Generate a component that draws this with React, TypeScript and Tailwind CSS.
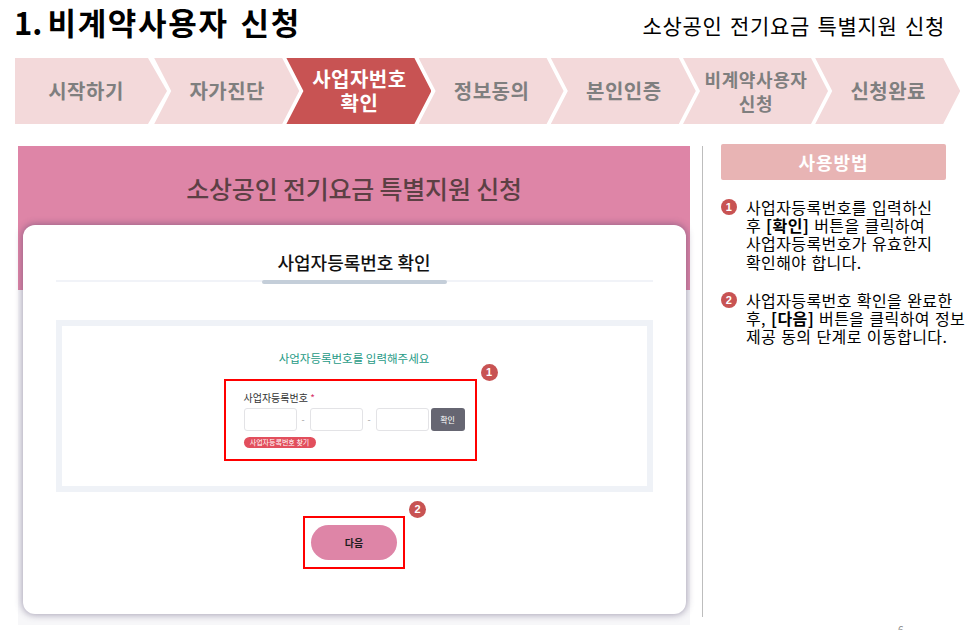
const kr = "font-['Noto_Sans_CJK_KR',sans-serif]";

const steps: { label: string[]; active?: boolean; first?: boolean }[] = [
  { label: ['시작하기'], first: true },
  { label: ['자가진단'] },
  { label: ['사업자번호', '확인'], active: true },
  { label: ['정보동의'] },
  { label: ['본인인증'] },
  { label: ['비계약사용자', '신청'] },
  { label: ['신청완료'] },
];

function Step({ label, active, first }: { label: string[]; active?: boolean; first?: boolean }) {
  const shape = first
    ? 'w-[152px] pr-[10px] [clip-path:polygon(0_0,133px_0,100%_50%,133px_100%,0_100%)]'
    : 'w-[145px] -ml-[12.8px] pl-[1px] [clip-path:polygon(0_0,128px_0,100%_50%,128px_100%,0_100%,17px_50%)]';
  const colour = active ? 'bg-[#c85353] text-white' : 'bg-[#f3d9da] text-[#7f7f7f]';
  const size = label.length > 1 && !active ? 'text-[18px] tracking-[0.6px]' : 'text-[20px] tracking-[0.5px]';
  return (
    <div className={`h-[66px] shrink-0 flex flex-col items-center justify-center font-bold leading-[24px] ${shape} ${colour} ${size}`}>
      {label.map((l) => (
        <span key={l}>{l}</span>
      ))}
    </div>
  );
}

function Badge({ n, className }: { n: number; className: string }) {
  return (
    <span className={`absolute w-[17px] h-[17px] rounded-full bg-[#c85353] text-white text-[11px] font-bold flex items-center justify-center font-['Liberation_Sans',sans-serif] ${className}`}>
      {n}
    </span>
  );
}

function Field() {
  return <div className="w-[53px] h-[23px] rounded-[3px] border border-[#e3e3e6] bg-white" />;
}

function Dash() {
  return <span className="w-[13px] text-center text-[9px] leading-[23px] text-[#9a9a9a]">-</span>;
}

export default function App() {
  return (
    <div className={`w-[979px] h-[630px] overflow-hidden bg-white relative ${kr}`}>
      <header className="h-[58px] pl-[14px] pr-[34px] flex justify-between items-start text-black">
        <h1 className="text-[31px] leading-[43px] font-bold tracking-[1.7px] [word-spacing:3px]">
          <span className="tracking-[0px] [word-spacing:-2px]">1. </span>비계약사용자 신청
        </h1>
        <p className="mt-[8px] text-[21px] leading-[34px] tracking-[0.7px] [word-spacing:2px]">소상공인 전기요금 특별지원 신청</p>
      </header>

      <nav className="ml-[15px] flex">
        {steps.map((s) => (
          <Step key={s.label[0]} {...s} />
        ))}
      </nav>

      <div className="mt-[20px] flex items-start">
        <main className="ml-[18px] mt-[2px] w-[672px] h-[479px] pt-[27px] flex flex-col items-center bg-[linear-gradient(#de85a7_144px,#f7f7f9_144px)]">
          <h2 className="text-[25px] leading-[30px] font-medium tracking-[-0.2px] text-[#5c4044]">소상공인 전기요금 특별지원 신청</h2>

          <section className="mt-[22px] w-[663px] h-[389px] rounded-[12px] bg-white shadow-[0_0_7px_1px_rgba(70,60,100,0.45)] pt-[22px] px-[33px] flex flex-col items-center">
            <h3 className="text-[18px] leading-[30px] font-medium text-[#111]">사업자등록번호 확인</h3>
            <div className="mt-[3px] w-full h-[2px] bg-[#f1f3f8] flex justify-center">
              <div className="w-[185px] h-[4px] rounded-full bg-[#c4ced9]" />
            </div>

            <div className="mt-[38px] w-full h-[172px] border-[6px] border-[#eff2f7] flex flex-col items-center relative">
              <p className="mt-[24px] text-[11.5px] leading-[16px] text-[#1f9a86]">사업자등록번호를 입력해주세요</p>
              <div className="mt-[13px] mr-[8px] w-[253px] h-[82px] border-2 border-[#ff0000] pl-[18px] pt-[9px] relative">
                <p className="text-[10px] leading-[15px] text-[#333]">
                  사업자등록번호 <span className="text-[#d6336c]">*</span>
                </p>
                <div className="mt-[3px] flex">
                  <Field />
                  <Dash />
                  <Field />
                  <Dash />
                  <Field />
                  <button className="ml-[2px] w-[34px] h-[23px] rounded-[3px] bg-[#666672] text-white text-[8px]">확인</button>
                </div>
                <span className="mt-[6px] block w-[72px] h-[11px] rounded-full bg-[#e24f5d] text-white text-[7px] leading-[11px] text-center whitespace-nowrap">
                  사업자등록번호 찾기
                </span>
                <Badge n={1} className="-top-[17px] left-[255px]" />
              </div>
            </div>

            <div className="mt-[24px] w-[102px] h-[53px] border-2 border-[#ff0000] flex items-center justify-center relative">
              <button className="w-[86px] h-[35px] rounded-full bg-[#de85a7] text-[#1d1d1d] text-[10px] font-bold">다음</button>
              <Badge n={2} className="-top-[17px] left-[104px]" />
            </div>
          </section>
        </main>

        <div className="ml-[12px] mt-[2px] w-px h-[471px] bg-[#bdbdbd]" />

        <aside className="ml-[18px] w-[250px] text-black">
          <div className="w-[225px] h-[36px] rounded-[2px] bg-[#e8b4b4] text-white text-[18px] font-bold tracking-[1px] flex items-center justify-center">
            사용방법
          </div>
          <ol className="mt-[18px] flex flex-col gap-[20px] text-[16px] leading-[18.2px] tracking-[0.4px] [word-spacing:1px] whitespace-nowrap">
            <li className="relative pl-[25px]">
              <Badge n={1} className="left-[0px] top-[1px] !w-[16px] !h-[16px]" />
              사업자등록번호를 입력하신<br />
              후 <b>[확인]</b> 버튼을 클릭하여<br />
              사업자등록번호가 유효한지<br />
              확인해야 합니다.
            </li>
            <li className="relative pl-[25px]">
              <Badge n={2} className="left-[0px] top-[1px] !w-[16px] !h-[16px]" />
              사업자등록번호 확인을 완료한<br />
              후, <b>[다음]</b> 버튼을 클릭하여 정보<br />
              제공 동의 단계로 이동합니다.
            </li>
          </ol>
        </aside>
      </div>

      <span className="absolute left-[898px] top-[623px] text-[10px] leading-[14px] text-[#888]">6</span>
    </div>
  );
}
